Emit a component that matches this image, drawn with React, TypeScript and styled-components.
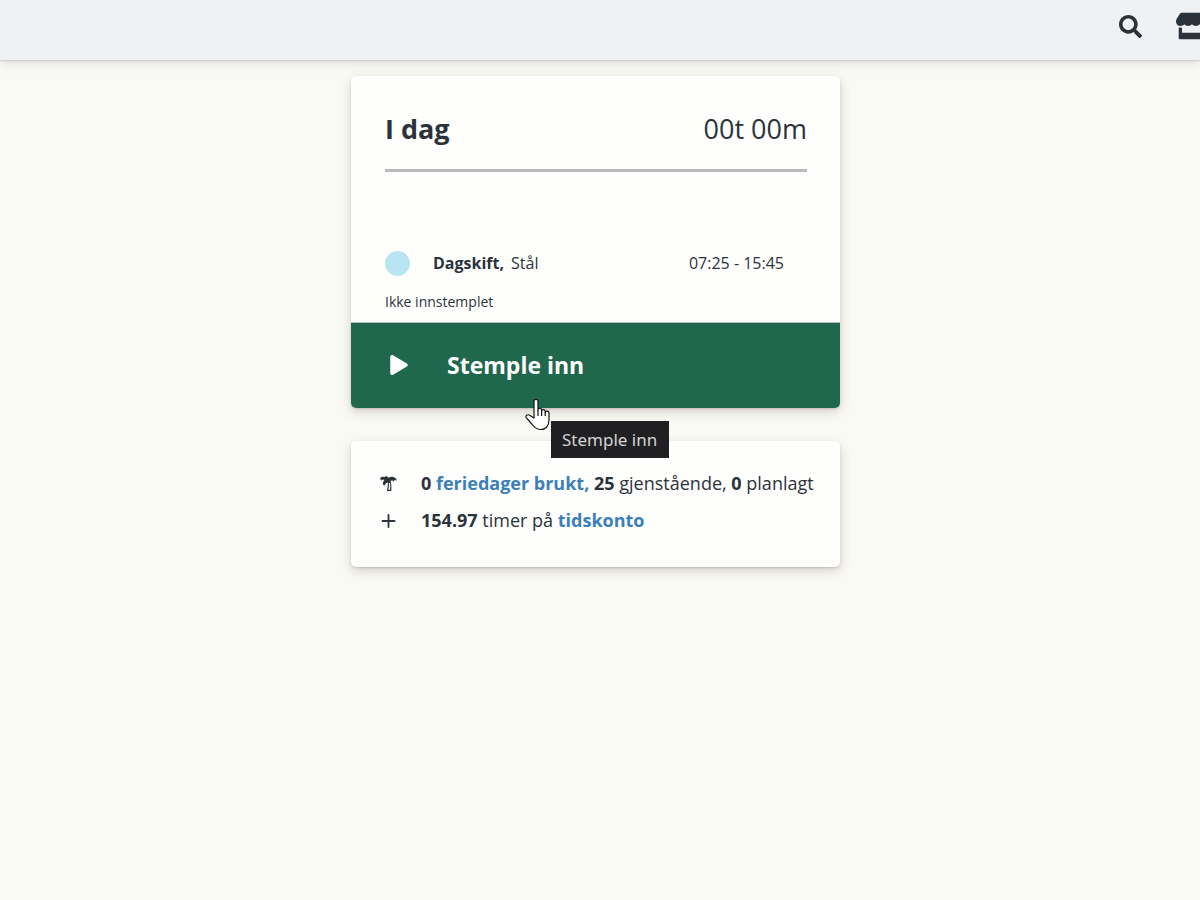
import React from "react";
import styled, { createGlobalStyle } from "styled-components";
import { FaSearch, FaStore, FaPlay } from "react-icons/fa";

const GlobalStyle = createGlobalStyle`
  * { box-sizing: border-box; }
  html, body { margin: 0; }
  body {
    min-height: 100vh;
    background: #fafaf5;
    color: #2b323a;
    font-family: "Open Sans", "Noto Sans", sans-serif;
    font-size: 18px;
    overflow-x: hidden;
  }
  a { color: #3a7fb9; font-weight: 700; text-decoration: none; }
`;

const TopBar = styled.header`
  height: 60px;
  display: flex;
  justify-content: flex-end;
  gap: 34px;
  background: #eef2f5;
  box-shadow: 0 1px 2px rgba(70, 50, 50, 0.18), 0 2px 12px rgba(70, 40, 40, 0.16);
  overflow-x: clip;
`;

const BarButton = styled.button<{ $overflow?: boolean }>`
  display: flex;
  align-items: center;
  height: 52px;
  flex: none;
  padding: 0;
  margin-right: ${(p) => (p.$overflow ? "-8px" : "0")};
  border: 0;
  background: none;
  color: #2b323a;
`;

const Main = styled.main`
  display: flex;
  flex-direction: column;
  align-items: center;
  gap: 33px;
  padding: 16px 9px 40px 0;
`;

const Card = styled.section`
  position: relative;
  width: 100%;
  max-width: 489px;
  border-radius: 5px;
  background: #fefffd;
  box-shadow: 0 1px 2px rgba(70, 40, 40, 0.16), 0 4px 12px rgba(70, 40, 40, 0.2);
`;

const CardHead = styled.div`
  display: flex;
  justify-content: space-between;
  align-items: center;
  height: 96px;
  margin: 0 33px 0 34px;
  padding-top: 12px;
  border-bottom: 3px solid #b7b9bb;
  font-size: 27px;
`;

const Title = styled.h1`
  margin: 0;
  font-size: 27px;
  font-weight: 700;
`;

const Shift = styled.div`
  display: flex;
  align-items: center;
  margin: 76px 56px 0 34px;
  height: 30px;
  font-size: 16px;
`;

const ShiftDot = styled.span`
  width: 25px;
  height: 25px;
  margin-right: 23px;
  border-radius: 50%;
  background: #b9e4f1;
`;

const Department = styled.span`
  margin-left: 7px;
`;

const ShiftTime = styled.time`
  margin-left: auto;
`;

const Status = styled.p`
  height: 44px;
  margin: 0 34px;
  padding-top: 14px;
  font-size: 14px;
  line-height: 20px;
`;

const PunchButton = styled.button`
  display: flex;
  align-items: center;
  gap: 38px;
  width: 100%;
  height: 86px;
  padding: 0 38px 2px;
  border: 0;
  border-top: 1px solid #b7b9bb;
  border-radius: 0 0 5px 5px;
  background: #1f684e;
  color: #fff;
  font: 700 23px "Open Sans", sans-serif;
  cursor: pointer;
`;

const Tooltip = styled.div`
  position: absolute;
  left: 200px;
  top: 345px;
  z-index: 2;
  padding: 0 12px 0 11px;
  background: #202022;
  color: #d4d4d4;
  font-family: "Noto Sans", sans-serif;
  font-size: 17px;
  line-height: 37px;
  white-space: nowrap;
`;

const Pointer = styled.svg`
  position: absolute;
  left: 173px;
  top: 322px;
  z-index: 3;
`;

const Summary = styled.ul`
  margin: 0;
  padding: 24px 26px 28px 29px;
  list-style: none;
`;

const SummaryRow = styled.li`
  display: flex;
  align-items: center;
  gap: 24px;
  height: 37px;
  padding-bottom: 1px;
  white-space: nowrap;
`;

const PalmIcon = () => (
  <svg width="17" height="17" viewBox="0 0 17 17" aria-hidden="true">
    <path
      d="M0.2 4.6C-0.2 2.4 2 1.4 4.2 2C5.8 0.6 7.8 1 8.6 2.8C11 1 15.8 1.6 16.9 5.6L14.6 5L13.6 6.4L12 5.2L10.6 6C11.4 9 11.6 12.4 11.2 16H6.8C7.6 12.8 8 10 7.8 7.2L5.8 8.6L4.6 10.6C2.8 10 2.4 8.4 3.4 6.6L4.4 5L3 4.6L1.8 5.8L1.4 4.4Z"
      fill="#2b323a"
    />
    <path d="M8.8 8C9.1 10.6 8.9 12.6 8.2 14.8H10C10.4 12.4 10.3 10.2 10 8Z" fill="#fefffd" />
  </svg>
);

const PlusIcon = () => (
  <svg width="17" height="17" viewBox="0 0 17 17" aria-hidden="true">
    <path d="M8.5 3V15M2.5 9H14.5" stroke="#2b323a" strokeWidth="1.8" strokeLinecap="round" />
  </svg>
);

export default function App() {
  return (
    <>
      <GlobalStyle />
      <TopBar>
        <BarButton aria-label="Søk">
          <FaSearch size={23} />
        </BarButton>
        <BarButton aria-label="Butikk" $overflow>
          <FaStore size={32} />
        </BarButton>
      </TopBar>
      <Main>
        <Card>
          <CardHead>
            <Title>I dag</Title>
            <span>00t 00m</span>
          </CardHead>
          <Shift>
            <ShiftDot />
            <strong>Dagskift,</strong>
            <Department>Stål</Department>
            <ShiftTime>07:25 - 15:45</ShiftTime>
          </Shift>
          <Status>Ikke innstemplet</Status>
          <PunchButton aria-describedby="punch-tip">
            <FaPlay size={20} />
            Stemple inn
          </PunchButton>
          <Tooltip id="punch-tip" role="tooltip">Stemple inn</Tooltip>
          <Pointer width="28" height="34" viewBox="0 0 28 34" aria-hidden="true">
            <path
              d="M10 20V3C10 0.8 14 0.8 14 3V12C14 9.6 17.6 9.8 17.6 12V13C17.6 11 21.2 11.2 21.2 13.4V14.2C21.6 12.4 25 12.8 25 15V22C25 28 21.5 31.5 17 31.5C12 31.5 10 29 7.8 26L2.2 19.6C1 17.6 3.6 16 5.6 17.2Z"
              fill="#fff"
              stroke="#111"
              strokeWidth="1.2"
              strokeLinejoin="round"
            />
            <path d="M14 12V18M17.6 13V18M21.2 14V18" stroke="#111" strokeWidth="1.2" />
          </Pointer>
        </Card>
        <Card>
          <Summary>
            <SummaryRow>
              <PalmIcon />
              <span>
                <strong>0</strong> <a href="#ferie">feriedager brukt,</a> <strong>25</strong> gjenstående, <strong>0</strong> planlagt
              </span>
            </SummaryRow>
            <SummaryRow>
              <PlusIcon />
              <span>
                <strong>154.97</strong> timer på <a href="#tidskonto">tidskonto</a>
              </span>
            </SummaryRow>
          </Summary>
        </Card>
      </Main>
    </>
  );
}
